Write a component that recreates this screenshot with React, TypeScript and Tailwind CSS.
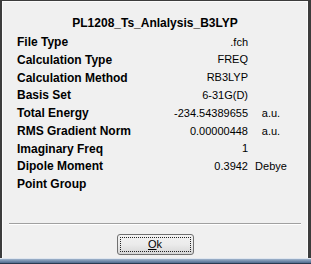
const rows: { label: string; value: string; unit?: string }[] = [
  { label: 'File Type', value: '.fch' },
  { label: 'Calculation Type', value: 'FREQ' },
  { label: 'Calculation Method', value: 'RB3LYP' },
  { label: 'Basis Set', value: '6-31G(D)' },
  { label: 'Total Energy', value: '-234.54389655', unit: 'a.u.' },
  { label: 'RMS Gradient Norm', value: '0.00000448', unit: 'a.u.' },
  { label: 'Imaginary Freq', value: '1' },
  { label: 'Dipole Moment', value: '0.3942', unit: 'Debye' },
  { label: 'Point Group', value: '' },
];

export default function App() {
  return (
    <div className="w-[311px] h-[264px] flex flex-col bg-[#f0f0f0] text-black overflow-hidden font-['Liberation_Sans',Arial,sans-serif]">
      <div className="flex-1 flex border-l-2 border-t border-r-[3px] border-l-[#3c3c3c] border-t-[#3c3c3c] border-r-[#3c3c3c]">
        <div className="flex-1 flex flex-col border-l border-t border-r border-white/70">
          <h1 className="pt-[12px] h-[30px] text-center text-[12px] leading-[18px] font-bold">
            PL1208_Ts_Anlalysis_B3LYP
          </h1>
          <dl className="mt-[1px] pl-[14px]">
            {rows.map((row) => (
              <div key={row.label} className="flex h-[17.8px] items-center text-[11px]">
                <dt className="w-[140px] text-[12px] font-bold">{row.label}</dt>
                <dd className="w-[91px] text-right">{row.value}</dd>
                <dd className="w-[46px] text-center">{row.unit}</dd>
              </div>
            ))}
          </dl>
          <div className="mt-auto mx-[6px] border-t border-[#a0a0a0] border-b border-b-white" />
          <div className="flex justify-center pt-[9px] pb-[3px]">
            <button className="w-[77px] h-[21px] rounded-[3px] border border-[#707070] bg-gradient-to-b from-[#f2f2f2] via-[#ebebeb] to-[#d6d6d6] p-[2px] text-[11px]">
              <span className="flex h-full items-center justify-center border border-dotted border-[#222]">
                <span>
                  <span className="underline">O</span>k
                </span>
              </span>
            </button>
          </div>
        </div>
      </div>
      <div className="h-[6px] border-t border-[#dfe6ef] bg-gradient-to-b from-[#9fb3cc] to-[#4f6b8e] border-b border-b-[#2a3a50]" />
    </div>
  );
}
